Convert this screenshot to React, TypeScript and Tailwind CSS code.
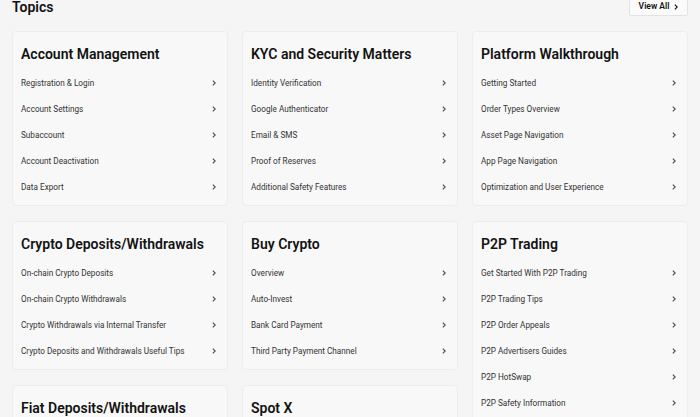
import React from 'react';

interface Topic {
  title: string;
  items: string[];
}

const columns: Topic[][] = [
  [
    {
      title: 'Account Management',
      items: ['Registration & Login', 'Account Settings', 'Subaccount', 'Account Deactivation', 'Data Export'],
    },
    {
      title: 'Crypto Deposits/Withdrawals',
      items: [
        'On-chain Crypto Deposits',
        'On-chain Crypto Withdrawals',
        'Crypto Withdrawals via Internal Transfer',
        'Crypto Deposits and Withdrawals Useful Tips',
      ],
    },
    {
      title: 'Fiat Deposits/Withdrawals',
      items: ['Fiat Deposits', 'Fiat Withdrawals'],
    },
  ],
  [
    {
      title: 'KYC and Security Matters',
      items: ['Identity Verification', 'Google Authenticator', 'Email & SMS', 'Proof of Reserves', 'Additional Safety Features'],
    },
    {
      title: 'Buy Crypto',
      items: ['Overview', 'Auto-Invest', 'Bank Card Payment', 'Third Party Payment Channel'],
    },
    {
      title: 'Spot X',
      items: ['Overview', 'Trading Rules'],
    },
  ],
  [
    {
      title: 'Platform Walkthrough',
      items: ['Getting Started', 'Order Types Overview', 'Asset Page Navigation', 'App Page Navigation', 'Optimization and User Experience'],
    },
    {
      title: 'P2P Trading',
      items: [
        'Get Started With P2P Trading',
        'P2P Trading Tips',
        'P2P Order Appeals',
        'P2P Advertisers Guides',
        'P2P HotSwap',
        'P2P Safety Information',
        'P2P FAQ',
      ],
    },
  ],
];

const Chevron = ({ className = '' }: { className?: string }) => (
  <svg width="4" height="6" viewBox="0 0 4 6" fill="none" className={className}>
    <path d="M0.8 0.6 L3.2 3 L0.8 5.4" stroke="currentColor" strokeWidth="1.1" />
  </svg>
);

const TopicCard = ({ topic }: { topic: Topic }) => (
  <div className="bg-[#f8f8f8] border border-[#ededed] rounded-[4px] pt-[12px] pb-[5px] pl-[8px] pr-[11px]">
    <h3 className="text-[14px] leading-[20px] font-semibold text-[#121212] whitespace-nowrap">{topic.title}</h3>
    <ul className="mt-[6px]">
      {topic.items.map((item) => (
        <li key={item} className="h-[26px] flex items-center justify-between text-[8.2px] text-[#333333]">
          <span>{item}</span>
          <Chevron className="text-[#4a4a4a]" />
        </li>
      ))}
    </ul>
  </div>
);

export default function App() {
  return (
    <div
      className="h-[417px] overflow-hidden bg-[#f5f5f5] px-[12px]"
      style={{ fontFamily: 'Roboto, "Noto Sans", sans-serif' }}
    >
      <div className="-mt-[10px] h-[26px] flex items-center justify-between">
        <h2 className="pt-[9px] text-[14px] font-semibold text-[#121212]">Topics</h2>
        <button className="h-[26px] w-[59px] flex items-center justify-center gap-[5px] bg-[#fbfbfb] border border-[#e3e3e3] rounded-[2px] text-[8.5px] font-semibold text-[#121212]">
          <span className="pt-[7px]">View All</span>
          <Chevron className="mt-[7px] text-[#121212]" />
        </button>
      </div>
      <div className="mt-[15px] flex gap-[14px]">
        {columns.map((col, i) => (
          <div key={i} className="w-[216px] flex flex-col gap-[15px]">
            {col.map((t) => (
              <TopicCard key={t.title} topic={t} />
            ))}
          </div>
        ))}
      </div>
    </div>
  );
}
